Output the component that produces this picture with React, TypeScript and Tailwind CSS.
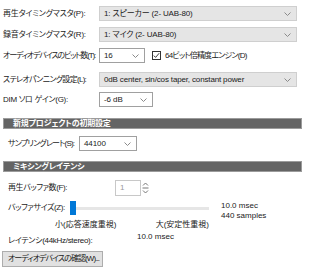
import React from 'react'

const font = "font-['Liberation_Sans','Noto_Sans_CJK_JP',sans-serif] [font-feature-settings:'palt']"

function Chevron() {
  return (
    <svg width="7" height="4" viewBox="0 0 7 4" className="shrink-0">
      <path d="M0.5 0.5 L3.5 3.5 L6.5 0.5" fill="none" stroke="#8a8a8a" strokeWidth="1" />
    </svg>
  )
}

// グレーのドロップダウン (選択専用)
function Dropdown({ value, width, track }: { value: string; width: string; track: string }) {
  return (
    <div className={`${width} h-[15px] flex items-center justify-between pl-[4px] pr-[5px] bg-[#e5e5e5] border border-[#cfcfcf]`}>
      <span className={`leading-none ${track}`}>{value}</span>
      <Chevron />
    </div>
  )
}

// 白いコンボボックス (編集可)
function Combo({ value, width }: { value: string; width: string }) {
  return (
    <div className={`${width} h-[15px] flex items-center justify-between pl-[4px] pr-[5px] bg-white border border-[#a0a0a0]`}>
      <span className="leading-none tracking-[-0.1px]">{value}</span>
      <Chevron />
    </div>
  )
}

function SectionBar({ title }: { title: string }) {
  return (
    <div className="ml-[3px] w-[299px] h-[11px] bg-[#646464] border border-[#9b9b9b] flex items-center pl-[9px]">
      <span className="text-white font-bold leading-none text-[8px] tracking-[-0.2px]">{title}</span>
    </div>
  )
}

export default function App() {
  return (
    <div className={`w-[320px] h-[278px] bg-white text-[#1a1a1a] text-[8px] whitespace-nowrap overflow-hidden ${font}`}>
      <div className="pt-[6px] flex flex-col">
        <div className="flex items-center h-[15px]">
          <span className="w-[99px] pl-[3px] tracking-[-0.2px]">再生タイミングマスタ(P):</span>
          <Dropdown value="1: スピーカー (2- UAB-80)" width="w-[198px]" track="tracking-[-0.15px]" />
        </div>
        <div className="flex items-center h-[15px] mt-[6px]">
          <span className="w-[99px] pl-[3px] tracking-[-0.2px]">録音タイミングマスタ(R):</span>
          <Dropdown value="1: マイク (2- UAB-80)" width="w-[198px]" track="tracking-[-0.15px]" />
        </div>
        <div className="flex items-center h-[15px] mt-[6px]">
          <span className="w-[99px] pl-[3px] tracking-[-1.15px]">オーディオデバイスのビット数(T):</span>
          <Combo value="16" width="w-[46px]" />
          <div className="ml-[7px] w-[9px] h-[9px] border border-[#333] flex items-center justify-center">
            <svg width="7" height="7" viewBox="0 0 7 7">
              <path d="M0.8 3.6 L2.6 5.4 L6.2 1.2" fill="none" stroke="#222" strokeWidth="0.9" />
            </svg>
          </div>
          <span className="ml-[4px] tracking-[-0.8px]">64ビット倍精度エンジン(D)</span>
        </div>
        <div className="flex items-center h-[15px] mt-[9px]">
          <span className="w-[99px] pl-[3px] tracking-[-0.7px]">ステレオパンニング設定(L):</span>
          <Dropdown value="0dB center, sin/cos taper, constant power" width="w-[198px]" track="tracking-[-0.15px]" />
        </div>
        <div className="flex items-center h-[15px] mt-[5px]">
          <span className="w-[99px] pl-[3px] tracking-[-0.3px]">DIM ソロ ゲイン(G):</span>
          <Combo value="-6 dB" width="w-[54px]" />
        </div>

        <div className="mt-[11px]">
          <SectionBar title="新規プロジェクトの初期設定" />
        </div>
        <div className="flex items-center h-[15px] mt-[7px]">
          <span className="w-[79px] pl-[8px] tracking-[-0.8px]">サンプリングレート(S):</span>
          <Combo value="44100" width="w-[58px]" />
        </div>

        <div className="mt-[10px]">
          <SectionBar title="ミキシングレイテンシ" />
        </div>

        <div className="flex items-center h-[16px] mt-[8px]">
          <span className="w-[115px] pl-[8px] tracking-[-0.4px]">再生バッファ数(F):</span>
          <div className="w-[26px] h-[16px] border border-[#c8c8c8] flex items-center pl-[4px] text-[#9a9a9a]">1</div>
          <svg width="7" height="14" viewBox="0 0 7 14" className="ml-[1px]">
            <path d="M1 4.5 L3.5 2 L6 4.5" fill="none" stroke="#777" strokeWidth="1" />
            <line x1="0.5" y1="7" x2="6.5" y2="7" stroke="#777" strokeWidth="1" />
            <path d="M1 9.5 L3.5 12 L6 9.5" fill="none" stroke="#777" strokeWidth="1" />
          </svg>
        </div>

        <div className="flex items-start mt-[5px]">
          <div className="w-[209px] flex flex-col">
            <div className="flex items-center h-[14px]">
              <span className="w-[70px] pl-[8px] tracking-[-0.4px]">バッファサイズ(Z):</span>
              <div className="w-[6px] h-[14px] bg-[#0078d7]" />
              <div className="w-[133px] h-[3px] bg-[#e6e6e6]" />
            </div>
            <div className="flex h-[14px] items-center mt-[3px]">
              <span className="ml-[55px] w-[138px]">小(応答速度重視)</span>
              <span>大(安定性重視)</span>
            </div>
          </div>
          <div className="ml-[12px] flex flex-col leading-[10px]">
            <span>10.0 msec</span>
            <span>440 samples</span>
          </div>
        </div>

        <div className="flex items-start h-[14px] leading-[10px]">
          <span className="w-[137px] pl-[8px] pt-[4px] tracking-[-0.3px]">レイテンシ(44kHz/stereo):</span>
          <span>10.0 msec</span>
        </div>

        <div className="mt-[5px] ml-[2px] w-[101px] h-[16px] bg-[#e1e1e1] border border-[#adadad] flex items-center pl-[5px]">
          <span className="leading-none tracking-[-0.95px]">オーディオデバイスの確認(W)...</span>
        </div>
      </div>
    </div>
  )
}
